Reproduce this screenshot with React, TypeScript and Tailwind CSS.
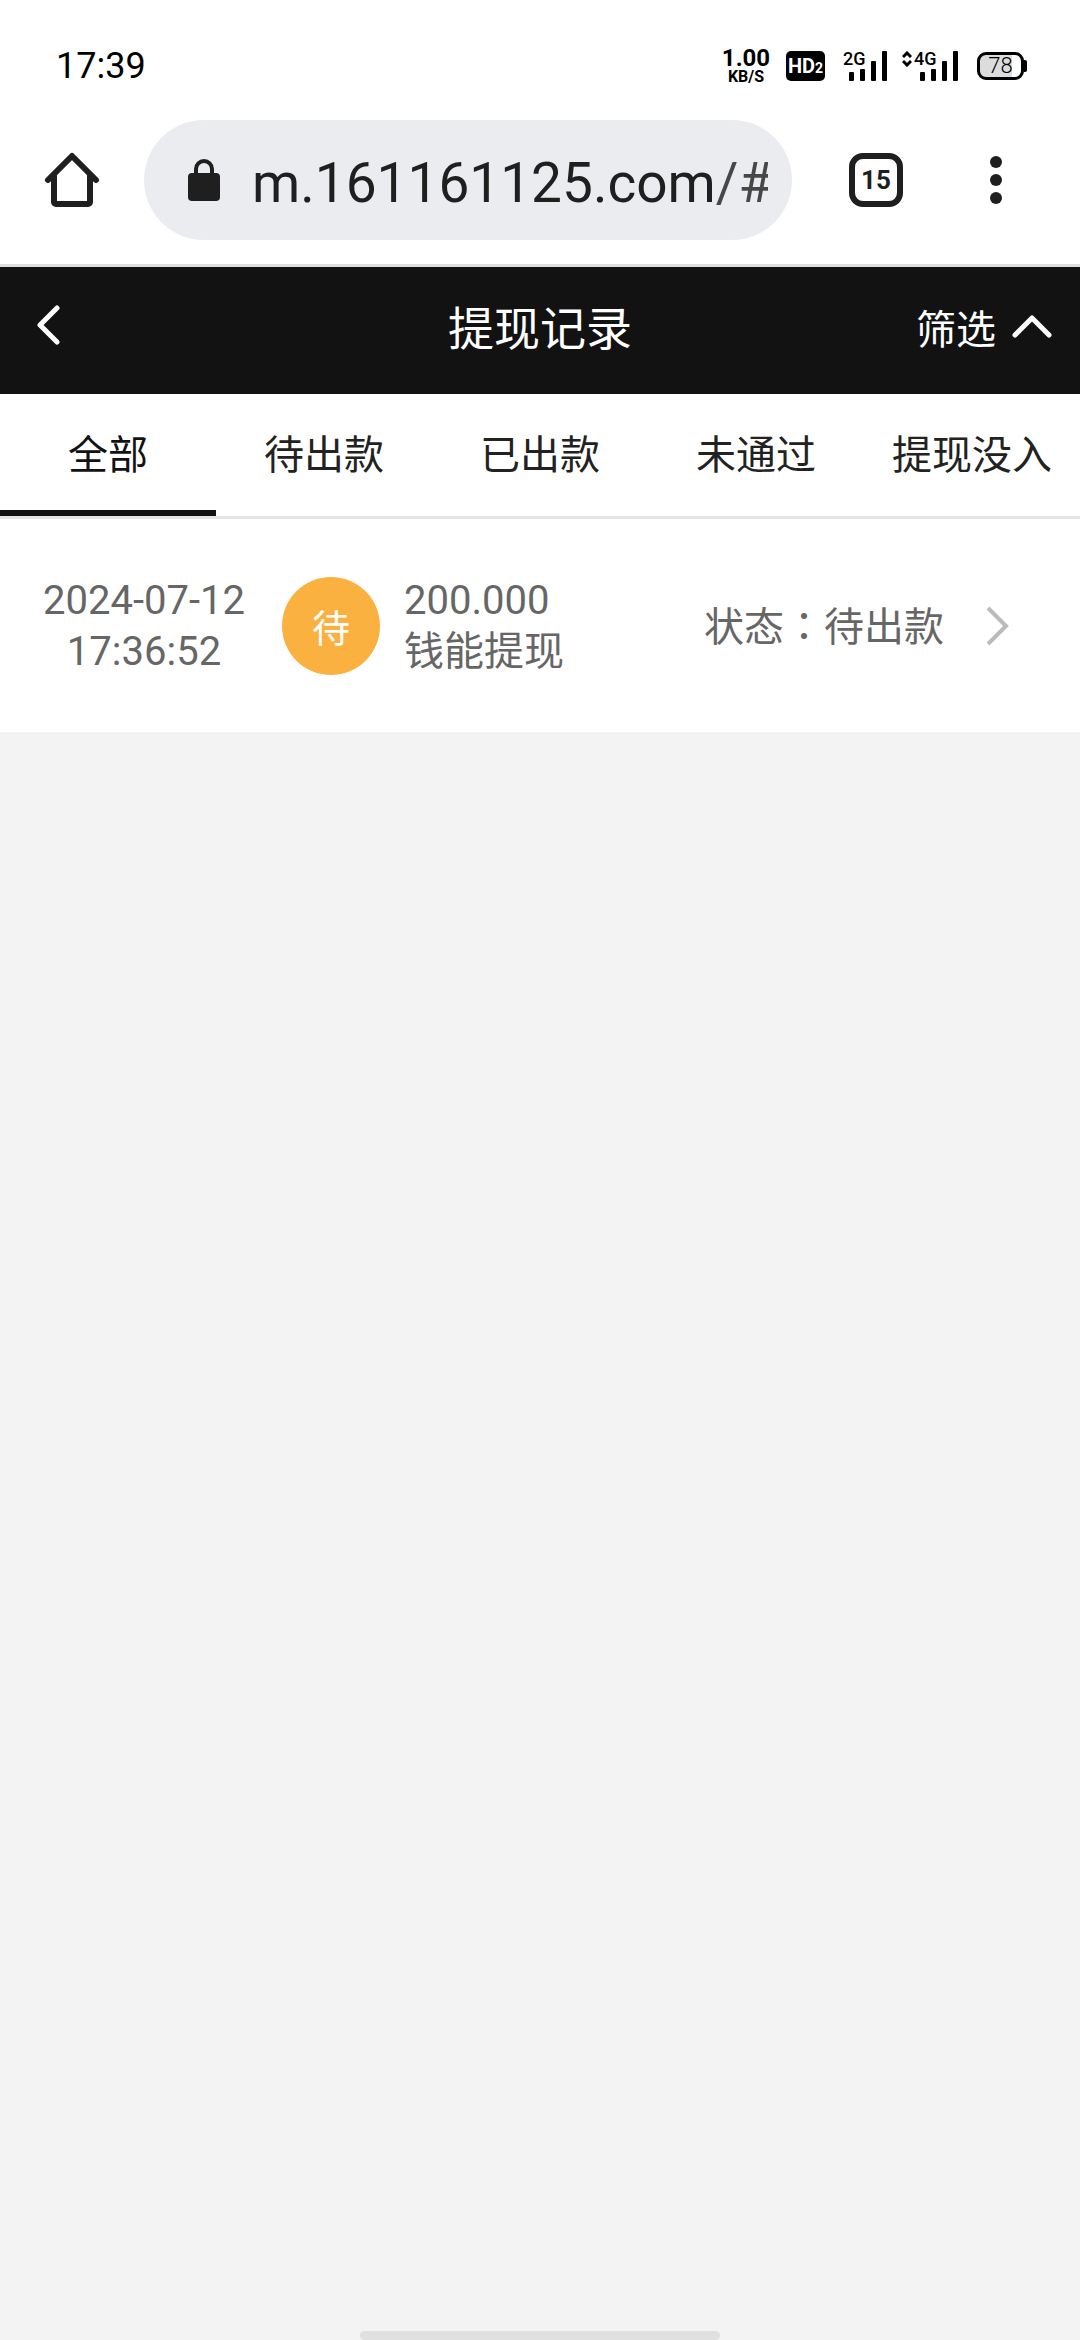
import { useState } from "react";

interface WithdrawalRecord {
    id: number;
    date: string;
    time: string;
    badge: string;
    amount: string;
    method: string;
    status: string;
}

const tabs = ["全部", "待出款", "已出款", "未通过", "提现没入"];

const records: WithdrawalRecord[] = [
    {
        id: 1,
        date: "2024-07-12",
        time: "17:36:52",
        badge: "待",
        amount: "200.000",
        method: "钱能提现",
        status: "待出款",
    },
];

function SignalIcon({ label, active = false }: { label: string; active?: boolean }) {
    return (
        <div className="relative h-[30px] w-[45px]">
            <svg viewBox="0 0 45 30" className="h-full w-full" fill="currentColor">
                <rect x="6" y="21" width="5" height="9" rx="1" />
                <rect x="17" y="18" width="5" height="12" rx="1" />
                <rect x="28" y="10" width="5" height="20" rx="1" />
                <rect x="39" y="0" width="5" height="30" rx="1" />
            </svg>
            <span className="absolute left-0 top-0 text-[18px] leading-[16px] font-medium">
                {label}
            </span>
            {active && (
                <svg
                    viewBox="0 0 10 16"
                    className="absolute top-0 right-full mr-[2px] h-4 w-[10px]"
                    fill="none"
                    stroke="currentColor"
                    strokeWidth="3"
                >
                    <path d="M1 6l4-4 4 4M1 10l4 4 4-4" />
                </svg>
            )}
        </div>
    );
}

function StatusBar() {
    return (
        <div className="flex h-[108px] items-center justify-between pt-6 pl-[56px] pr-[53px] text-black">
            <time className="text-[36px] leading-none">17:39</time>
            <div className="flex items-center">
                <div className="flex w-[48px] flex-col items-center font-bold">
                    <span className="text-[24px] leading-[22px]">1.00</span>
                    <span className="text-[16px] leading-[16px]">KB/S</span>
                </div>
                <div className="ml-4 flex h-[30px] w-[39px] items-center justify-center rounded-[5px] bg-black font-bold text-white">
                    <span className="text-[20px] leading-none">HD</span>
                    <span className="pt-1 text-[14px] leading-none">2</span>
                </div>
                <div className="ml-[18px]">
                    <SignalIcon label="2G" />
                </div>
                <div className="ml-[26px]">
                    <SignalIcon label="4G" active />
                </div>
                <div className="ml-[18px] flex items-center">
                    <div className="flex h-[28px] w-[47px] items-center justify-center rounded-[9px] border-3 border-black bg-linear-to-r from-[#dcdcdc] from-78% to-white to-78% text-[22px] leading-none font-light">
                        78
                    </div>
                    <div className="h-3 w-[3px] rounded-r-[2px] bg-black" />
                </div>
            </div>
        </div>
    );
}

function BrowserBar() {
    return (
        <div className="flex items-center border-b-3 border-[#dedfde] pt-3 pb-6 pl-9 text-[#1f1f1f]">
            <button aria-label="主页" className="shrink-0">
                <svg viewBox="0 0 72 72" className="h-[72px] w-[72px]" fill="none" stroke="currentColor" strokeWidth="6" strokeLinejoin="round">
                    <path d="M12 36l24-24 24 24" strokeLinecap="round" />
                    <path d="M18 31v27a2 2 0 0 0 2 2h32a2 2 0 0 0 2-2V31" />
                </svg>
            </button>
            <div className="ml-9 flex h-[120px] min-w-0 flex-1 items-center rounded-full bg-[#ebecf0] pr-6 pl-11">
                <svg viewBox="0 0 32 42" className="h-[42px] w-8 shrink-0" fill="currentColor">
                    <rect x="0" y="14" width="32" height="28" rx="4" />
                    <path d="M8 16V10a8 8 0 0 1 16 0v6" fill="none" stroke="currentColor" strokeWidth="4" />
                </svg>
                <input
                    type="text"
                    aria-label="网址"
                    readOnly
                    defaultValue="m.161161125.com/#"
                    className="ml-8 h-[72px] min-w-0 flex-1 bg-[linear-gradient(to_right,#1f1f1f_464px,#474747_464px)] bg-clip-text pt-[6px] text-[55px] text-transparent outline-none"
                />
            </div>
            <button
                aria-label="标签页"
                className="ml-[57px] flex h-[54px] w-[54px] shrink-0 items-center justify-center rounded-[14px] border-6 border-current text-[26px] leading-none font-bold"
            >
                15
            </button>
            <button aria-label="更多" className="mr-12 ml-[57px] flex w-[72px] shrink-0 flex-col items-center gap-[6px]">
                <span className="h-3 w-3 rounded-full bg-current" />
                <span className="h-3 w-3 rounded-full bg-current" />
                <span className="h-3 w-3 rounded-full bg-current" />
            </button>
        </div>
    );
}

function PageHeader() {
    return (
        <header className="grid h-[127px] grid-cols-[1fr_auto_1fr] items-center bg-[#121212] px-7 pb-1 text-white">
            <button aria-label="返回" className="mb-2 ml-2 justify-self-start">
                <svg viewBox="0 0 24 40" className="h-10 w-6" fill="none" stroke="currentColor" strokeWidth="5" strokeLinecap="round" strokeLinejoin="round">
                    <path d="M21 3L4 20l17 17" />
                </svg>
            </button>
            <h1 className="text-[46px] leading-none">提现记录</h1>
            <button className="flex items-center gap-4 justify-self-end text-[40px] leading-none">
                <span className="pt-1">筛选</span>
                <svg viewBox="0 0 40 24" className="mb-1 h-6 w-10" fill="none" stroke="currentColor" strokeWidth="5" strokeLinecap="round" strokeLinejoin="round">
                    <path d="M3 20L20 3l17 17" />
                </svg>
            </button>
        </header>
    );
}

function RecordRow({ record }: { record: WithdrawalRecord }) {
    return (
        <li>
            <button className="flex h-[213px] w-full items-center bg-white pr-[70px] pl-10 text-left text-[40px] leading-[51px] text-[#666]">
                <span className="w-[208px] text-center">
                    {record.date}
                    <br />
                    {record.time}
                </span>
                <span className="ml-[34px] flex h-[98px] w-[98px] items-center justify-center rounded-full bg-[#fbb13f] pt-2 text-[38px] text-white">
                    {record.badge}
                </span>
                <span className="ml-6 flex-1">
                    {record.amount}
                    <br />
                    {record.method}
                </span>
                <span>
                    状态
                    <span lang="zh-TW" className="font-['Noto_Sans_CJK_TC',sans-serif]">：</span>
                    {record.status}
                </span>
                <svg viewBox="0 0 24 40" className="ml-[42px] h-10 w-6" fill="none" stroke="#bbb" strokeWidth="4">
                    <path d="M2 2l18 18L2 38" />
                </svg>
            </button>
        </li>
    );
}

export default function App() {
    const [activeTab, setActiveTab] = useState(tabs[0]);

    const visible = records.filter(
        (record) => activeTab === tabs[0] || record.status === activeTab
    );

    return (
        <div
            lang="zh-CN"
            className="flex min-h-screen flex-col bg-[#f3f3f3] font-['Roboto','Noto_Sans_CJK_SC',sans-serif]"
        >
            <div className="bg-white">
                <StatusBar />
                <BrowserBar />
            </div>
            <PageHeader />
            <nav className="grid grid-cols-5 border-b-3 border-[#e5e5e5] bg-white">
                {tabs.map((tab) => (
                    <button
                        key={tab}
                        onClick={() => setActiveTab(tab)}
                        className={`h-[122px] border-b-6 pt-2 text-[40px] leading-none whitespace-nowrap
                            ${tab === activeTab
                                ? "border-[#121212] text-[#121212]"
                                : "border-transparent text-[#222]"
                            }`}
                    >
                        {tab}
                    </button>
                ))}
            </nav>
            <ul className="flex-1">
                {visible.map((record) => (
                    <RecordRow key={record.id} record={record} />
                ))}
            </ul>
            <div className="mx-auto h-[9px] w-1/3 rounded-full bg-[#e0e0e0]" />
        </div>
    );
}
